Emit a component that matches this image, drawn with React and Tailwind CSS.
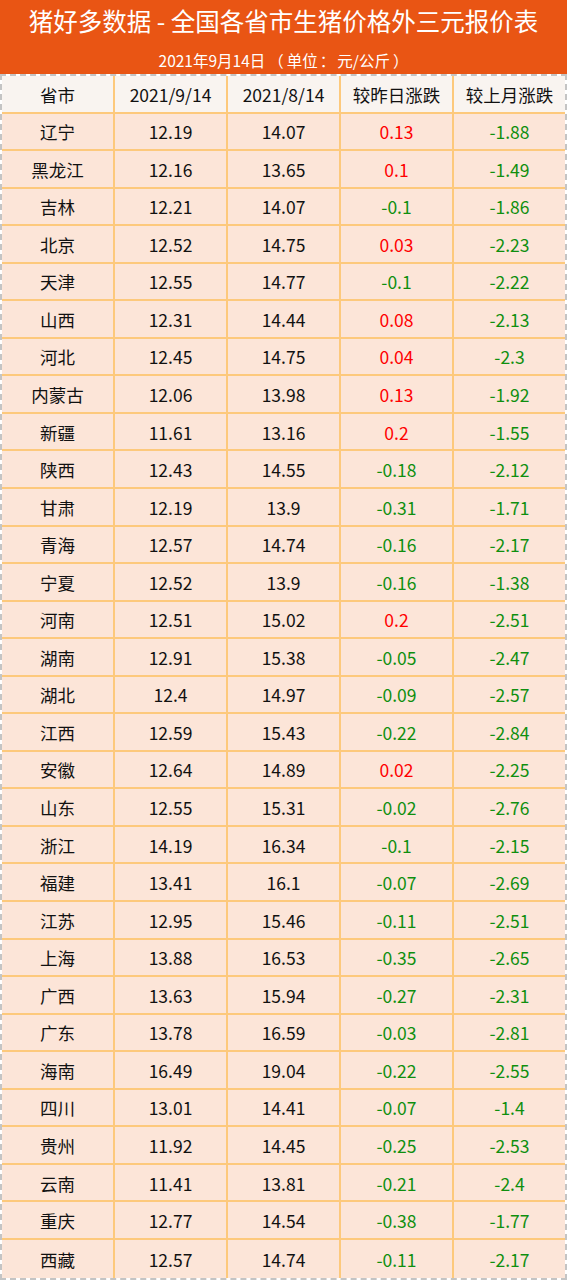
const rows = [
  ["辽宁", "12.19", "14.07", "0.13", "-1.88"],
  ["黑龙江", "12.16", "13.65", "0.1", "-1.49"],
  ["吉林", "12.21", "14.07", "-0.1", "-1.86"],
  ["北京", "12.52", "14.75", "0.03", "-2.23"],
  ["天津", "12.55", "14.77", "-0.1", "-2.22"],
  ["山西", "12.31", "14.44", "0.08", "-2.13"],
  ["河北", "12.45", "14.75", "0.04", "-2.3"],
  ["内蒙古", "12.06", "13.98", "0.13", "-1.92"],
  ["新疆", "11.61", "13.16", "0.2", "-1.55"],
  ["陕西", "12.43", "14.55", "-0.18", "-2.12"],
  ["甘肃", "12.19", "13.9", "-0.31", "-1.71"],
  ["青海", "12.57", "14.74", "-0.16", "-2.17"],
  ["宁夏", "12.52", "13.9", "-0.16", "-1.38"],
  ["河南", "12.51", "15.02", "0.2", "-2.51"],
  ["湖南", "12.91", "15.38", "-0.05", "-2.47"],
  ["湖北", "12.4", "14.97", "-0.09", "-2.57"],
  ["江西", "12.59", "15.43", "-0.22", "-2.84"],
  ["安徽", "12.64", "14.89", "0.02", "-2.25"],
  ["山东", "12.55", "15.31", "-0.02", "-2.76"],
  ["浙江", "14.19", "16.34", "-0.1", "-2.15"],
  ["福建", "13.41", "16.1", "-0.07", "-2.69"],
  ["江苏", "12.95", "15.46", "-0.11", "-2.51"],
  ["上海", "13.88", "16.53", "-0.35", "-2.65"],
  ["广西", "13.63", "15.94", "-0.27", "-2.31"],
  ["广东", "13.78", "16.59", "-0.03", "-2.81"],
  ["海南", "16.49", "19.04", "-0.22", "-2.55"],
  ["四川", "13.01", "14.41", "-0.07", "-1.4"],
  ["贵州", "11.92", "14.45", "-0.25", "-2.53"],
  ["云南", "11.41", "13.81", "-0.21", "-2.4"],
  ["重庆", "12.77", "14.54", "-0.38", "-1.77"],
  ["西藏", "12.57", "14.74", "-0.11", "-2.17"],
];

const head = ["省市", "2021/9/14", "2021/8/14", "较昨日涨跌", "较上月涨跌"];

function tone(v) {
  if (v.startsWith("-")) return "text-[#0f8f0f]";
  return "text-[#ff0000]";
}

function Row({ cells, header, last }) {
  return (
    <div
      className={`flex h-[37.55px] ${last ? "" : "border-b-2 border-[#fdc97c]"} ${
        header ? "bg-[#f9f4f0]" : "bg-[#fce5d8]"
      }`}
    >
      {cells.map((c, i) => (
        <div
          key={i}
          className={`flex flex-1 items-center justify-center pt-[2px] ${
            i < 4 ? "border-r-2 border-[#fdc97c]" : ""
          } ${!header && i >= 3 ? tone(c) : "text-[#111]"}`}
        >
          {c}
        </div>
      ))}
    </div>
  );
}

export default function App() {
  return (
    <div
      className="w-[567px] bg-white text-[17.5px]"
      style={{ fontFamily: '"Noto Sans CJK SC", "Noto Sans", sans-serif' }}
    >
      <div className="flex h-[74px] flex-col items-center bg-[#e95514] text-white">
        <div className="mt-[4px] text-[24.5px] font-normal leading-[34px]">
          猪好多数据 - 全国各省市生猪价格外三元报价表
        </div>
        <div className="mt-[12px] text-[15.5px] leading-[20px]">
          2021年9月14日<span className="mx-[3px]">（</span>单位<span className="mx-[2px]">：</span>元/公斤<span className="ml-[3px]">）</span>
        </div>
      </div>
      <div className="border-2 border-dashed border-[#c4c4c4]">
        <Row cells={head} header />
        {rows.map((r, i) => (
          <Row key={r[0]} cells={r} last={i === rows.length - 1} />
        ))}
      </div>
    </div>
  );
}
